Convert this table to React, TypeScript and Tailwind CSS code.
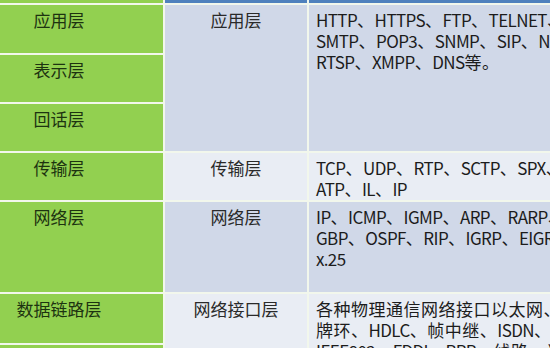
const font = { fontFamily: '"Noto Sans CJK SC", "Noto Sans", sans-serif' };

// latin runs are set tighter than the CJK ones, like the Calibri in the source table
function Mixed({ text }: { text: string }) {
  const parts = text.split(/([\x20-\x7e]+)/).filter(Boolean);
  return (
    <div>
      {parts.map((p, i) =>
        /^[\x20-\x7e]+$/.test(p) ? (
          <span key={i} className="tracking-[-0.6px]">
            {p}
          </span>
        ) : (
          <span key={i}>{p}</span>
        )
      )}
    </div>
  );
}

function Lines({ lines }: { lines: string[] }) {
  return (
    <div className="pl-[7px] pt-[4px] leading-[21px] tracking-[0.5px] text-[#1c1c1c] whitespace-nowrap overflow-hidden">
      {lines.map((l, i) => (
        <Mixed key={i} text={l} />
      ))}
    </div>
  );
}

function Layer({ name }: { name: string }) {
  return (
    <div className="bg-[#92d050] pt-[4px] leading-[21px] text-[#1d3310]">
      <div className="w-[118px] text-center whitespace-nowrap">{name}</div>
    </div>
  );
}

function Tcp({ name, light, span }: { name: string; light?: boolean; span?: string }) {
  return (
    <div
      className={`${light ? "bg-[#e9edf4]" : "bg-[#d0d8e8]"} ${span ?? ""} pt-[4px] leading-[21px] text-center text-[#2a2a2a] whitespace-nowrap`}
    >
      {name}
    </div>
  );
}

export default function App() {
  return (
    <div className="w-[550px] h-[348px] overflow-hidden bg-white text-[17px]" style={font}>
      <div className="grid grid-cols-[163px_142px_243px] grid-rows-[3px_48px_47px_47px_47px_90px_49px_40px] gap-x-[2px] gap-y-[2px] bg-[#f2f7ec]">
        {/* header */}
        <div className="bg-[#92d050]" />
        <div className="bg-[#4f81bd]" />
        <div className="bg-[#4f81bd]" />

        {/* application / presentation / session */}
        <Layer name="应用层" />
        <Tcp name="应用层" span="row-span-3" />
        <div className="row-span-3 bg-[#d0d8e8]">
          <Lines
            lines={[
              "HTTP、HTTPS、FTP、TELNET、SSH、",
              "SMTP、POP3、SNMP、SIP、NFS、",
              "RTSP、XMPP、DNS等。",
            ]}
          />
        </div>
        <Layer name="表示层" />
        <Layer name="回话层" />

        {/* transport */}
        <Layer name="传输层" />
        <Tcp name="传输层" light />
        <div className="bg-[#e9edf4]">
          <Lines lines={["TCP、UDP、RTP、SCTP、SPX、", "ATP、IL、IP"]} />
        </div>

        {/* network */}
        <Layer name="网络层" />
        <Tcp name="网络层" />
        <div className="bg-[#d0d8e8]">
          <Lines lines={["IP、ICMP、IGMP、ARP、RARP、E", "GBP、OSPF、RIP、IGRP、EIGRP、", "x.25"]} />
        </div>

        {/* data link */}
        <Layer name="数据链路层" />
        <Tcp name="网络接口层" light span="row-span-2" />
        <div className="row-span-2 bg-[#e9edf4]">
          <Lines
            lines={[
              "各种物理通信网络接口以太网、令",
              "牌环、HDLC、帧中继、ISDN、ATM、",
              "IEEE802、FDDI、PPP、线路、光纤",
            ]}
          />
        </div>
        <Layer name="物理层" />
      </div>
    </div>
  );
}
